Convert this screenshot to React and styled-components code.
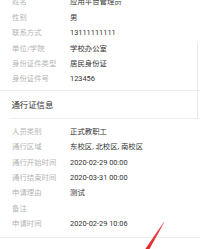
import styled, { createGlobalStyle } from "styled-components";

const GlobalStyle = createGlobalStyle`
  html, body {
    margin: 0;
    padding: 0;
    background: #fff;
  }
  body {
    width: 200px;
    height: 249px;
    overflow: hidden;
    font-family: Roboto, "Noto Sans CJK SC", sans-serif;
  }
`;

const Screen = styled.div`
  position: relative;
  width: 200px;
  height: 249px;
  overflow: hidden;
  background: #fff;
`;

const Scroller = styled.div`
  margin-top: -11.5px;
`;

const Card = styled.div`
  padding: ${({ pad }) => pad || "6px 0 5px"};
  border-bottom: 1px solid #efefef;
`;

const Row = styled.div`
  display: grid;
  grid-template-columns: 58px 1fr;
  align-items: center;
  height: 15.4px;
  padding-left: 12px;
  font-size: 7.4px;
  line-height: 1;
  white-space: nowrap;
`;

const Label = styled.span`
  color: #b5b5b5;
`;

const Value = styled.span`
  color: #333;
`;

const SectionTitle = styled.div`
  display: flex;
  align-items: center;
  height: 27px;
  margin-left: 10px;
  padding-left: 1.5px;
  border-bottom: 1px solid #efefef;
  font-size: 8.4px;
  color: #333;
`;

const ScrollThumb = styled.div`
  position: absolute;
  left: 196.5px;
  top: 43px;
  width: 1px;
  height: 75px;
  background: #e8e8e8;
  border-radius: 1px;
`;

const Overlay = styled.svg`
  position: absolute;
  left: 0;
  top: 0;
  pointer-events: none;
`;

const userInfo = [
  ["姓名", "应用平台管理员"],
  ["性别", "男"],
  ["联系方式", "13111111111"],
  ["单位/学院", "学校办公室"],
  ["身份证件类型", "居民身份证"],
  ["身份证件号", "123456"],
];

const passInfo = [
  ["人员类别", "正式教职工"],
  ["通行区域", "东校区, 北校区, 南校区"],
  ["通行开始时间", "2020-02-29 00:00"],
  ["通行结束时间", "2020-03-31 00:00"],
  ["申请理由", "测试"],
  ["备注", ""],
  ["申请时间", "2020-02-29 10:06"],
];

const InfoRows = ({ items }) =>
  items.map(([label, value]) => (
    <Row key={label}>
      <Label>{label}</Label>
      <Value>{value}</Value>
    </Row>
  ));

const App = () => {
  return (
    <Screen>
      <GlobalStyle />
      <Scroller>
        <Card pad="6px 0 3px">
          <InfoRows items={userInfo} />
        </Card>
        <SectionTitle>通行证信息</SectionTitle>
        <Card pad="5px 0 5px">
          <InfoRows items={passInfo} />
        </Card>
      </Scroller>
      <ScrollThumb />
      <Overlay width="200" height="249" viewBox="0 0 200 249">
        <defs>
          <linearGradient id="stroke" x1="0" y1="1" x2="0" y2="0">
            <stop offset="0" stopColor="#e0242a" />
            <stop offset="0.7" stopColor="#e8454a" />
            <stop offset="1" stopColor="#f2a0a3" />
          </linearGradient>
        </defs>
        <polygon points="145,249.5 149.2,249.5 164.6,222 163.6,222" fill="url(#stroke)" />
      </Overlay>
    </Screen>
  );
};

export default App;
